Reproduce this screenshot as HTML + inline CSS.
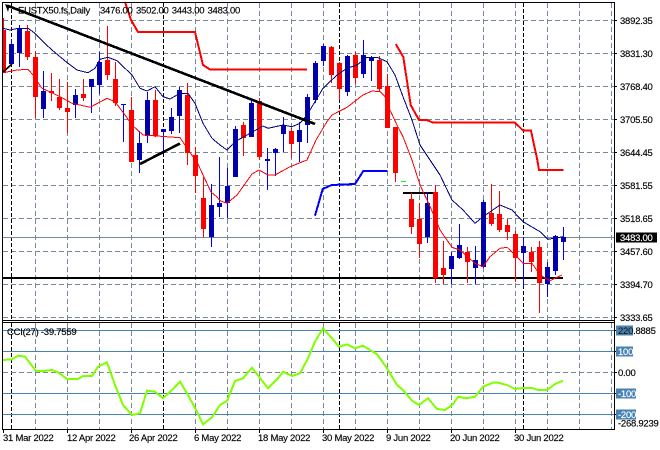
<!DOCTYPE html>
<html><head><meta charset="utf-8"><style>
html,body{margin:0;padding:0;background:#fff;width:660px;height:450px;overflow:hidden}
svg{display:block}
text{font-family:"Liberation Sans",sans-serif;font-size:9.5px;letter-spacing:-.25px;fill:#000;stroke:#000;stroke-width:.15px}
text.w{fill:#fff;stroke:#fff}
.g{stroke:#778899;stroke-width:1;stroke-dasharray:5 3;fill:none;shape-rendering:crispEdges}
.k{stroke:#000;stroke-width:1;stroke-dasharray:4 2;fill:none;shape-rendering:crispEdges}
.s{stroke:#4682b4;stroke-width:1;fill:none;shape-rendering:crispEdges}
.f{stroke:#000;stroke-width:1;fill:none;shape-rendering:crispEdges}
.wb{stroke:#0000ff;stroke-width:1;fill:none;shape-rendering:crispEdges}
.wr{stroke:#ff0000;stroke-width:1;fill:none;shape-rendering:crispEdges}
.bb rect{width:4px;fill:#0000a0;stroke:#0000c8;stroke-width:1;shape-rendering:crispEdges}
.br rect{width:4px;fill:#ff0000;stroke:#ff0000;stroke-width:1;shape-rendering:crispEdges}
.l{fill:none;shape-rendering:crispEdges}
</style></head><body>
<svg width="660" height="450" viewBox="0 0 660 450" xmlns="http://www.w3.org/2000/svg">
<rect width="660" height="450" fill="#fff"/>
<!-- horizontal grid main -->
<path class="g" d="M3 20.5H614M3 53.5H614M3 86.5H614M3 119.5H614M3 152.5H614M3 185.5H614M3 218.5H614M3 251.5H614M3 284.5H614M3 317.5H614"/>
<!-- vertical grid -->
<path class="g" d="M35.5 3V320M67.5 3V320M99.5 3V320M131.5 3V320M195.5 3V320M227.5 3V320M259.5 3V320M291.5 3V320M323.5 3V320M355.5 3V320M387.5 3V320M419.5 3V320M451.5 3V320M483.5 3V320M515.5 3V320M547.5 3V320M579.5 3V320M611.5 3V320"/>
<path class="g" d="M35.5 323V429M67.5 323V429M99.5 323V429M131.5 323V429M195.5 323V429M227.5 323V429M259.5 323V429M291.5 323V429M323.5 323V429M355.5 323V429M387.5 323V429M419.5 323V429M451.5 323V429M483.5 323V429M515.5 323V429M547.5 323V429M579.5 323V429M611.5 323V429"/>
<path class="k" d="M11.5 3V320M163.5 3V320M339.5 3V320M523.5 3V320M11.5 323V429M163.5 323V429M339.5 323V429M523.5 323V429"/>
<!-- bid line -->
<path d="M3 237.5H614" stroke="#778899" stroke-width="1" shape-rendering="crispEdges"/>
<!-- indicator levels -->
<path class="s" d="M3 330.5H614M3 351.5H614M3 393.5H614M3 414.5H614"/>
<path class="g" d="M3 372.5H614"/>
<!-- black horizontal lines -->
<path d="M3 278H563" stroke="#000" stroke-width="2" shape-rendering="crispEdges"/>
<path d="M403 193H433" stroke="#000" stroke-width="2" shape-rendering="crispEdges"/>
<!-- wicks blue -->
<path class="wb" d="M11.5 39V66M19.5 25V67M43.5 71V118M75.5 89V118M91.5 79V113M99.5 52V94M123.5 104V142M139.5 131V173M147.5 92V143M163.5 129V153M171.5 108V134M179.5 87V133M211.5 184V247M219.5 157V217M227.5 168V218M235.5 126V177M251.5 100V137M267.5 148V190M275.5 148V176M283.5 117V152M299.5 122V162M307.5 94V143M315.5 61V103M323.5 44V66M347.5 55V96M363.5 40V78M371.5 56V81M427.5 192V243M451.5 252V284M459.5 224V259M475.5 246V284M483.5 200V268M523.5 237V287M547.5 262V297M555.5 235V275M563.5 227V260"/>
<!-- wicks red -->
<path class="wr" d="M3.5 18V73M27.5 25V60M35.5 51V118M51.5 73V101M59.5 79V110M67.5 82V133M83.5 79V101M107.5 26V80M115.5 62V106M131.5 97V162M155.5 90V137M187.5 83V165M195.5 147V193M203.5 177V237M243.5 122V156M259.5 98V160M291.5 128V158M331.5 46V83M339.5 62V100M355.5 52V84M379.5 56V92M387.5 74V128M395.5 127V182M411.5 193V234M419.5 203V258M435.5 185V283M443.5 241V284M467.5 247V283M491.5 184V226M499.5 191V232M507.5 219V240M515.5 231V282M531.5 247V272M539.5 241V313"/>
<!-- bodies blue -->
<g class="bb">
<rect x="9.5" y="44.5" height="19"/><rect x="17.5" y="28.5" height="24"/><rect x="41.5" y="91.5" height="17"/><rect x="73.5" y="95.5" height="9"/><rect x="89.5" y="79.5" height="7"/><rect x="97.5" y="62.5" height="22"/><rect x="137.5" y="143.5" height="16"/><rect x="145.5" y="100.5" height="35"/><rect x="161.5" y="129.5" height="2"/><rect x="169.5" y="117.5" height="13"/><rect x="177.5" y="90.5" height="25"/><rect x="209.5" y="205.5" height="31"/><rect x="217.5" y="203.5" height="3"/><rect x="225.5" y="186.5" height="16"/><rect x="233.5" y="129.5" height="47"/><rect x="249.5" y="103.5" height="33"/><rect x="265.5" y="159.5" height="1"/><rect x="273.5" y="149.5" height="3"/><rect x="281.5" y="125.5" height="8"/><rect x="297.5" y="130.5" height="11"/><rect x="305.5" y="97.5" height="27"/><rect x="313.5" y="63.5" height="36"/><rect x="321.5" y="46.5" height="14"/><rect x="345.5" y="56.5" height="35"/><rect x="361.5" y="55.5" height="18"/><rect x="369.5" y="57.5" height="3"/><rect x="425.5" y="203.5" height="33"/><rect x="449.5" y="256.5" height="12"/><rect x="457.5" y="245.5" height="12"/><rect x="473.5" y="260.5" height="7"/><rect x="481.5" y="202.5" height="64"/><rect x="521.5" y="246.5" height="6"/><rect x="545.5" y="267.5" height="16"/><rect x="553.5" y="236.5" height="34"/><rect x="561.5" y="237.5" height="4"/>
<path d="M121 104.5h5" stroke="#0000ff" fill="none" shape-rendering="crispEdges"/>
</g>
<!-- bodies red -->
<g class="br">
<rect x="3.5" y="30.5" height="42" style="width:2px"/><rect x="25.5" y="31.5" height="25"/><rect x="33.5" y="57.5" height="39"/><rect x="49.5" y="91.5" height="1"/><rect x="57.5" y="97.5" height="10"/><rect x="65.5" y="108.5" height="3"/><rect x="81.5" y="94.5" height="3"/><rect x="105.5" y="60.5" height="14"/><rect x="113.5" y="79.5" height="23"/><rect x="129.5" y="110.5" height="51"/><rect x="153.5" y="100.5" height="35"/><rect x="185.5" y="95.5" height="57"/><rect x="193.5" y="155.5" height="20"/><rect x="201.5" y="198.5" height="30"/><rect x="241.5" y="125.5" height="12"/><rect x="257.5" y="101.5" height="55"/><rect x="289.5" y="131.5" height="12"/><rect x="329.5" y="47.5" height="27"/><rect x="337.5" y="63.5" height="25"/><rect x="353.5" y="55.5" height="22"/><rect x="377.5" y="60.5" height="28"/><rect x="385.5" y="86.5" height="41"/><rect x="393.5" y="127.5" height="45"/><rect x="409.5" y="199.5" height="27"/><rect x="417.5" y="219.5" height="24"/><rect x="433.5" y="192.5" height="85"/><rect x="441.5" y="268.5" height="6"/><rect x="465.5" y="252.5" height="9"/><rect x="489.5" y="213.5" height="10"/><rect x="497.5" y="214.5" height="15"/><rect x="505.5" y="225.5" height="6"/><rect x="513.5" y="234.5" height="23"/><rect x="529.5" y="252.5" height="9"/><rect x="537.5" y="247.5" height="35"/>
</g>
<path d="M401 181.5h5" stroke="#00ff00" stroke-width="1" shape-rendering="crispEdges"/>
<!-- MA navy -->
<path class="l" stroke="#000080" stroke-width="1" d="M3 28.3L10 30L18 28.3L28 28.3L35 33.3L43 41.7L52 50L60 56.7L68 63.3L77 70L88 72.7L95 68.3L100 59.3L108 57.3L117 60.7L125 68.3L132 75L140 88.3L147 91L155 86.7L163 96.7L170 99L180 93.3L188 93.3L195 103.3L203 123.3L212 138.3L220 145L227 150L235 141.7L250 133.3L263 126L268 128.3L283 125L292 126.7L300 123.3L307 115L315 101.7L323 88.3L337 75L347 68.3L357 65L367 57.3L377 57.3L387 61.7L395 75L403 96.7L412 120L420 145L430 160L440 175L452 200L463 210L475 223.3L483 216.7L500 205L512 210L523 221.7L540 231.7L548 239.3L563 236.7"/>
<!-- MA red -->
<path class="l" stroke="#ff0000" stroke-width="1" d="M3 72.7L17 70L28 69.3L33 75L42 88.3L53 93.3L63 98.3L72 103.3L90 107.3L107 98.3L115 101.7L125 115L132 125L143 135L157 136L180 137.7L193 156.7L197 162L204 177L211 192L217 197L220 200.7L227 203.3L237 195L252 174L259 170L268 175L275 175L290 166.7L307 160L316 140L327 121.7L332 115L347 107.3L363 95L372 91L380 91.7L385 96.7L390 110L397 125L403 136.7L412 160L420 185L427 200L433 213.3L440 230L452 247.3L460 250L475 263.3L483 266.7L490 256.7L500 248.3L507 247.3L517 256.7L523 263.3L532 263.3L540 275L550 280.7L562 275"/>
<!-- stepped red -->
<path class="l" stroke="#ff0000" stroke-width="2" d="M125 2L131 20L138 32H195L203 65L210 69.5H307"/>
<path class="l" stroke="#ff0000" stroke-width="2" d="M395.7 44L403.3 57L410.7 105L419 120H426.7L433.3 122.7H515L523.3 130.7H531L537.3 160L539 170H563.5"/>
<!-- stepped blue -->
<path class="l" stroke="#0000ff" stroke-width="2" d="M315 215.7L322.7 189L331.7 185L355 184L363.3 171H387.7"/>
<!-- black trendlines -->
<path d="M7 5.5L315 124" stroke="#000" stroke-width="2.6" fill="none" shape-rendering="crispEdges"/>
<path d="M140 164L180 143.5" stroke="#000" stroke-width="2.6" fill="none" shape-rendering="crispEdges"/>
<!-- corner line -->
<path d="M3 72L12 64" stroke="#000" stroke-width="1.6" fill="none"/>
<!-- CCI -->
<path class="l" stroke="#7fff00" stroke-width="2" d="M3 360L12 359.3L18 355.7L25 356.7L36 371L43 371L52 370L58 372.3L67 379L78 379L83 376L92 376L98 366.7L107 362.3L115 385L123 405L132 415L140 413.3L147 390.7L155 391.7L163 398.3L172 390L180 381.7L188 395L197 411.7L203 424.3L212 417.3L220 405L227 401L235 381L243 378.3L252 367.7L259 376.7L268 388.3L278 378.3L283 371.7L292 376L300 373.3L308 358.3L315 341.7L323 328.3L332 338.3L339 346.7L347 344.3L355 348.3L363 345.7L377 354.3L387 368.3L397 385L403 390L412 400.7L419 405L428 398.3L437 409L445 410L453 404.3L458 396.7L466 398.3L475 396.7L483 386.7L493 382.7L498 382.7L507 385L515 389L523 388L532 388L538 390L547 390L555 384L563 380.7"/>
<!-- frames -->
<path class="f" d="M2.5 2.5H614.5V429.5H2.5ZM2.5 320.5H614.5M2.5 322.5H614.5"/>
<!-- right ticks -->
<path class="f" d="M614 20.5h3M614 53.5h3M614 86.5h3M614 119.5h3M614 152.5h3M614 185.5h3M614 218.5h3M614 251.5h3M614 284.5h3M614 317.5h3M614 330.5h3M614 351.5h3M614 372.5h3M614 393.5h3M614 414.5h3"/>
<!-- bottom ticks -->
<path class="f" d="M3.5 429v4M67.5 429v4M131.5 429v4M195.5 429v4M259.5 429v4M323.5 429v4M387.5 429v4M451.5 429v4M515.5 429v4"/>
<!-- top-left marker -->
<path d="M5 4L13 7L9 8L8 12Z" fill="#000"/>
<!-- labels -->
<text x="18" y="13.5">EUSTX50.fs,Daily</text>
<text x="100" y="13.5">3476.00</text>
<text x="136" y="13.5">3502.00</text>
<text x="171.7" y="13.5">3443.00</text>
<text x="207.5" y="13.5">3483.00</text>
<g>
<text x="620" y="24">3892.35</text>
<text x="620" y="57">3831.30</text>
<text x="620" y="90">3768.40</text>
<text x="620" y="123">3705.50</text>
<text x="620" y="156">3644.45</text>
<text x="620" y="189">3581.55</text>
<text x="620" y="222">3518.65</text>
<text x="620" y="255">3457.60</text>
<text x="620" y="288">3394.70</text>
<text x="620" y="321">3333.65</text>
</g>
<rect x="616" y="232.5" width="41" height="10" fill="#000"/>
<text class="w" x="620" y="241">3483.00</text>
<rect x="616" y="325.5" width="17" height="10" fill="#4682b4"/>
<rect x="616" y="346.5" width="17" height="10" fill="#4682b4"/>
<rect x="616" y="388.5" width="20" height="10" fill="#4682b4"/>
<rect x="616" y="409.5" width="20" height="10" fill="#4682b4"/>
<text class="w" x="618" y="334">220</text>
<text x="618" y="334">220.8885</text>
<text class="w" x="618" y="355">100</text>
<text x="618" y="376">0.00</text>
<text class="w" x="618" y="397">-100</text>
<text class="w" x="618" y="418">-200</text>
<text x="618" y="426.5">-268.9239</text>
<text x="7" y="335">CCI(27) -39.7559</text>
<text x="3" y="441">31 Mar 2022</text>
<text x="67" y="441">12 Apr 2022</text>
<text x="129" y="441">26 Apr 2022</text>
<text x="194" y="441">6 May 2022</text>
<text x="258" y="441">18 May 2022</text>
<text x="322" y="441">30 May 2022</text>
<text x="386" y="441">9 Jun 2022</text>
<text x="450" y="441">20 Jun 2022</text>
<text x="514" y="441">30 Jun 2022</text>
</svg>
</body></html>
